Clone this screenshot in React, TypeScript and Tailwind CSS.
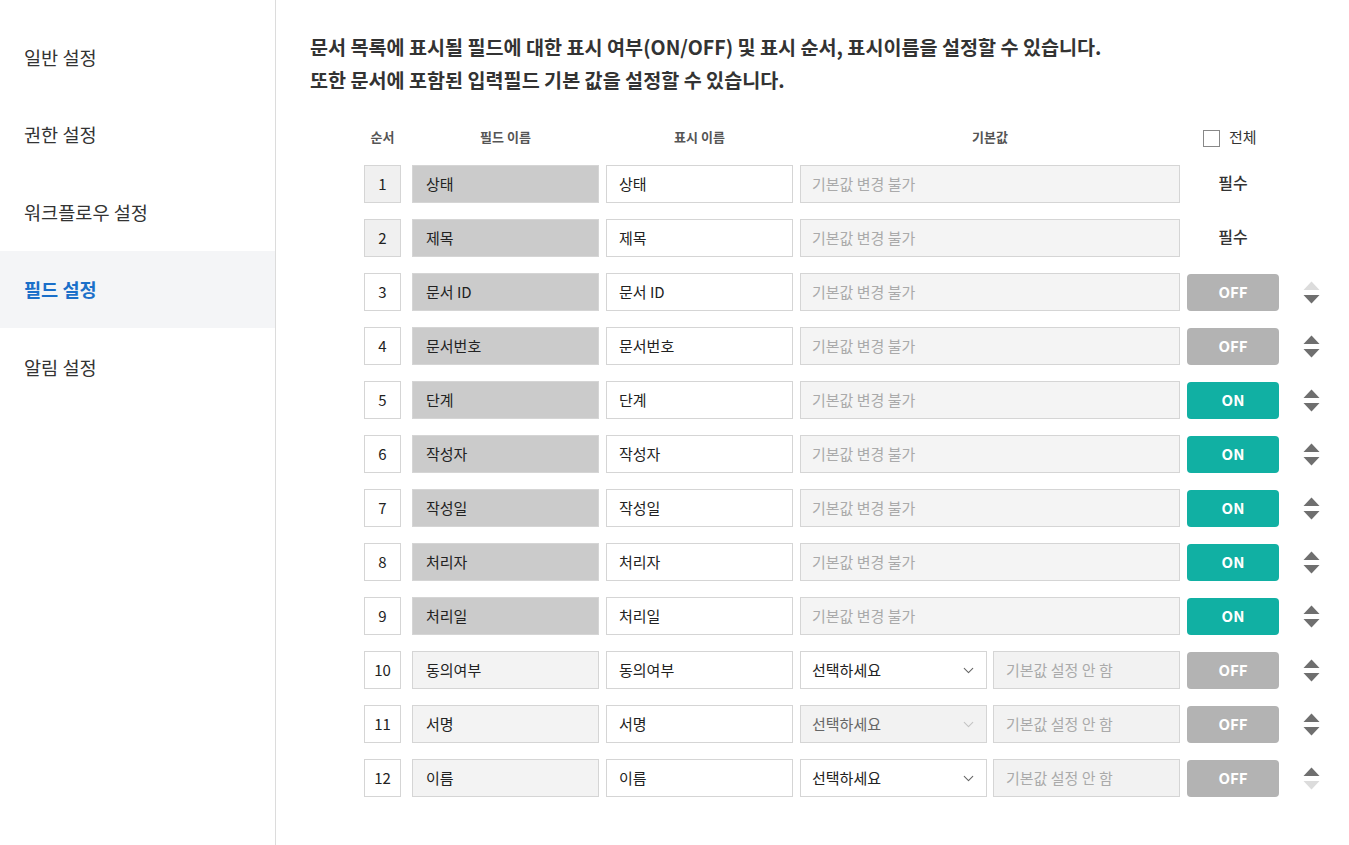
import React from "react";
import { ChevronDown } from "lucide-react";

type Row = {
  n: number;
  field: string;
  display: string;
  kind: "required" | "fixed" | "select";
  on?: boolean;
  selectDisabled?: boolean;
  upDisabled?: boolean;
  downDisabled?: boolean;
};

const rows: Row[] = [
  { n: 1, field: "상태", display: "상태", kind: "required" },
  { n: 2, field: "제목", display: "제목", kind: "required" },
  { n: 3, field: "문서 ID", display: "문서 ID", kind: "fixed", on: false, upDisabled: true },
  { n: 4, field: "문서번호", display: "문서번호", kind: "fixed", on: false },
  { n: 5, field: "단계", display: "단계", kind: "fixed", on: true },
  { n: 6, field: "작성자", display: "작성자", kind: "fixed", on: true },
  { n: 7, field: "작성일", display: "작성일", kind: "fixed", on: true },
  { n: 8, field: "처리자", display: "처리자", kind: "fixed", on: true },
  { n: 9, field: "처리일", display: "처리일", kind: "fixed", on: true },
  { n: 10, field: "동의여부", display: "동의여부", kind: "select", on: false },
  { n: 11, field: "서명", display: "서명", kind: "select", on: false, selectDisabled: true },
  { n: 12, field: "이름", display: "이름", kind: "select", on: false, downDisabled: true },
];

const menu = ["일반 설정", "권한 설정", "워크플로우 설정", "필드 설정", "알림 설정"];

function Arrows({ up, down }: { up: boolean; down: boolean }) {
  return (
    <svg width="17" height="23" viewBox="0 0 17 23">
      <polygon points="0.5,9 8.5,0.5 16.5,9" fill={up ? "#dcdcdc" : "#6f6f6f"} />
      <polygon points="0.5,14 16.5,14 8.5,22.5" fill={down ? "#dcdcdc" : "#6f6f6f"} />
    </svg>
  );
}

export default function App() {
  return (
    <div
      className="flex min-h-[845px] w-[1349px] bg-white text-[#222]"
      style={{ fontFamily: '"Noto Sans CJK KR", "Noto Sans", sans-serif' }}
    >
      <aside className="w-[276px] shrink-0 border-r border-[#dcdcdc] pt-[18px]">
        {menu.map((m) => {
          const active = m === "필드 설정";
          return (
            <div
              key={m}
              className={
                "flex h-[77.5px] items-center pl-[24px] text-[18.6px] " +
                (active ? "bg-[#f4f5f7] font-bold text-[#1a6fc9]" : "text-[#333]")
              }
            >
              {m}
            </div>
          );
        })}
      </aside>
      <main className="flex-1 pl-[34px] pt-[30px]">
        <div className="text-[19.6px] font-bold leading-[33px] text-[#333]">
          <p>문서 목록에 표시될 필드에 대한 표시 여부(ON/OFF) 및 표시 순서, 표시이름을 설정할 수 있습니다.</p>
          <p>또한 문서에 포함된 입력필드 기본 값을 설정할 수 있습니다.</p>
        </div>
        <div className="ml-[54px] mt-[27px]">
          <div className="flex h-[28px] items-center text-[13px] font-bold text-[#555]">
            <div className="w-[37px] text-center">순서</div>
            <div className="ml-[11px] w-[187px] text-center">필드 이름</div>
            <div className="ml-[7px] w-[187px] text-center">표시 이름</div>
            <div className="ml-[7px] w-[380px] text-center">기본값</div>
            <div className="ml-[7px] flex w-[92px] items-center gap-[9px] pl-[16px]">
              <span className="mt-[3px] block h-[17px] w-[17px] border border-[#888] bg-white" />
              <span className="mt-[1px] text-[15px] font-normal text-[#333]">전체</span>
            </div>
          </div>
          <div className="mt-[14px] flex flex-col gap-[16px]">
            {rows.map((r) => {
              const req = r.kind === "required";
              const fieldBg = r.kind === "select" ? "bg-[#f3f3f3]" : "bg-[#cbcbcb]";
              return (
                <div key={r.n} className="flex h-[38px] items-center text-[15px]">
                  <div
                    className={
                      "flex h-[38px] w-[37px] items-center justify-center border border-[#d5d5d5] " +
                      (req ? "bg-[#f0f0f0]" : "bg-white")
                    }
                  >
                    {r.n}
                  </div>
                  <div
                    className={
                      "ml-[11px] flex h-[38px] w-[187px] items-center border border-[#d5d5d5] pl-[13px] " +
                      fieldBg
                    }
                  >
                    {r.field}
                  </div>
                  <div className="ml-[7px] flex h-[38px] w-[187px] items-center border border-[#d5d5d5] bg-white pl-[12px]">
                    {r.display}
                  </div>
                  {r.kind === "select" ? (
                    <>
                      <div
                        className={
                          "ml-[7px] flex h-[38px] w-[187px] items-center justify-between border border-[#d5d5d5] pl-[11px] pr-[9px] " +
                          (r.selectDisabled ? "bg-[#f2f2f2] text-[#666]" : "bg-white text-[#222]")
                        }
                      >
                        <span>선택하세요</span>
                        <ChevronDown
                          size={17}
                          strokeWidth={1.5}
                          color={r.selectDisabled ? "#c4c4c4" : "#666"}
                        />
                      </div>
                      <div className="ml-[6px] flex h-[38px] w-[187px] items-center border border-[#d5d5d5] bg-[#f2f2f2] pl-[12px] text-[#aaa]">
                        기본값 설정 안 함
                      </div>
                    </>
                  ) : (
                    <div className="ml-[7px] flex h-[38px] w-[380px] items-center border border-[#d5d5d5] bg-[#f4f4f4] pl-[11px] text-[#aaa]">
                      기본값 변경 불가
                    </div>
                  )}
                  {req ? (
                    <div className="ml-[7px] mb-[4px] flex w-[92px] items-center justify-center text-[16px] font-medium text-[#333]">
                      필수
                    </div>
                  ) : (
                    <>
                      <div
                        className={
                          "ml-[7px] flex h-[37px] w-[92px] items-center justify-center rounded-[4px] text-[15px] font-bold text-white " +
                          (r.on ? "bg-[#11b0a3]" : "bg-[#b3b3b3]")
                        }
                      >
                        {r.on ? "ON" : "OFF"}
                      </div>
                      <div className="ml-[24px] flex items-center">
                        <Arrows up={!!r.upDisabled} down={!!r.downDisabled} />
                      </div>
                    </>
                  )}
                </div>
              );
            })}
          </div>
        </div>
      </main>
    </div>
  );
}
